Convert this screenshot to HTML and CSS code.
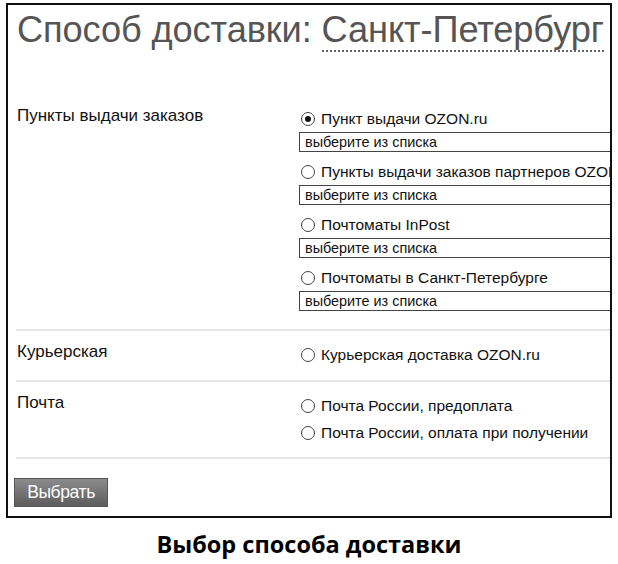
FILE: index.html
```html
<!DOCTYPE html>
<html lang="ru">
<head>
<meta charset="utf-8">
<link rel="stylesheet" href="styles.css">
</head>
<body>
<div class="frame">
  <h1 class="title">Способ доставки: <span class="city">Санкт-Петербург</span></h1>
  <div class="group first">
    <div class="group-label">Пункты выдачи заказов</div>
    <div class="options">
      <div class="opt"><span class="radio checked"></span>Пункт выдачи OZON.ru</div>
      <div class="select">выберите из списка</div>
      <div class="opt"><span class="radio"></span>Пункты выдачи заказов партнеров OZON.ru</div>
      <div class="select">выберите из списка</div>
      <div class="opt"><span class="radio"></span>Почтоматы InPost</div>
      <div class="select">выберите из списка</div>
      <div class="opt"><span class="radio"></span>Почтоматы в Санкт-Петербурге</div>
      <div class="select">выберите из списка</div>
    </div>
  </div>
  <div class="group">
    <div class="group-label">Курьерская</div>
    <div class="options">
      <div class="opt"><span class="radio"></span>Курьерская доставка OZON.ru</div>
    </div>
  </div>
  <div class="group last">
    <div class="group-label">Почта</div>
    <div class="options">
      <div class="opt"><span class="radio"></span>Почта России, предоплата</div>
      <div class="opt"><span class="radio"></span>Почта России, оплата при получении</div>
    </div>
  </div>
  <div class="actions">
    <button class="btn">Выбрать</button>
  </div>
</div>
<div class="caption">Выбор способа доставки</div>
</body>
</html>
```
FILE: styles.css
```css
html, body {
  margin: 0;
  padding: 0;
  background: #fff;
}
body {
  width: 618px;
  height: 564px;
  overflow: hidden;
  font-family: "Liberation Sans", Arial, sans-serif;
  color: #111;
}
.frame {
  margin: 3px 0 0 6px;
  width: 594px;
  height: 511px;
  border: 2px solid #111;
  overflow: hidden;
  padding-left: 8px;
}
.title {
  margin: 4px 0 0 1px;
  font-weight: normal;
  font-size: 36.2px;
  line-height: 42px;
  color: #555;
  white-space: nowrap;
  letter-spacing: -0.1px;
}
.city {
  border-bottom: 2px dotted #666;
}
.group {
  display: flex;
  border-bottom: 2px solid #e6e6e6;
  padding: 10px 0 12px;
}
.group.first {
  padding-top: 0;
  margin-top: 54px;
}
.group.last {
  padding-bottom: 11px;
}
.group-label {
  width: 283px;
  flex: none;
  font-size: 17px;
  line-height: 20px;
  padding-left: 1px;
  padding-top: 1px;
}
.options {
  flex: 1;
  display: flex;
  flex-direction: column;
  min-width: 0;
}
.opt {
  display: flex;
  align-items: center;
  font-size: 15.5px;
  line-height: 20px;
  white-space: nowrap;
  height: 27px;
}
.radio {
  width: 12px;
  height: 12px;
  border: 1px solid #444;
  border-radius: 50%;
  margin: 0 6px 0 1px;
  position: relative;
  flex: none;
}
.radio.checked::after {
  content: "";
  position: absolute;
  left: 3px;
  top: 3px;
  width: 6px;
  height: 6px;
  border-radius: 50%;
  background: #111;
}
.select {
  height: 18px;
  border: 1px solid #444;
  border-right: none;
  font-size: 14.4px;
  line-height: 18px;
  padding-left: 5px;
  margin: 0 0 6px -1px;
  white-space: nowrap;
}
.actions {
  padding-top: 19px;
  margin-left: -2px;
}
.btn {
  font-family: "Liberation Sans", Arial, sans-serif;
  font-size: 17.5px;
  color: #fff;
  width: 94px;
  height: 29px;
  border: 1px solid #555;
  background: linear-gradient(#8c8c8c, #5c5c5c);
  padding: 0;
  letter-spacing: -0.4px;
}
.caption {
  text-align: center;
  font-family: "Open Sans", "Noto Sans", sans-serif;
  font-weight: bold;
  font-size: 23.5px;
  line-height: 30px;
  margin-top: 11px;
  color: #000;
}
```
